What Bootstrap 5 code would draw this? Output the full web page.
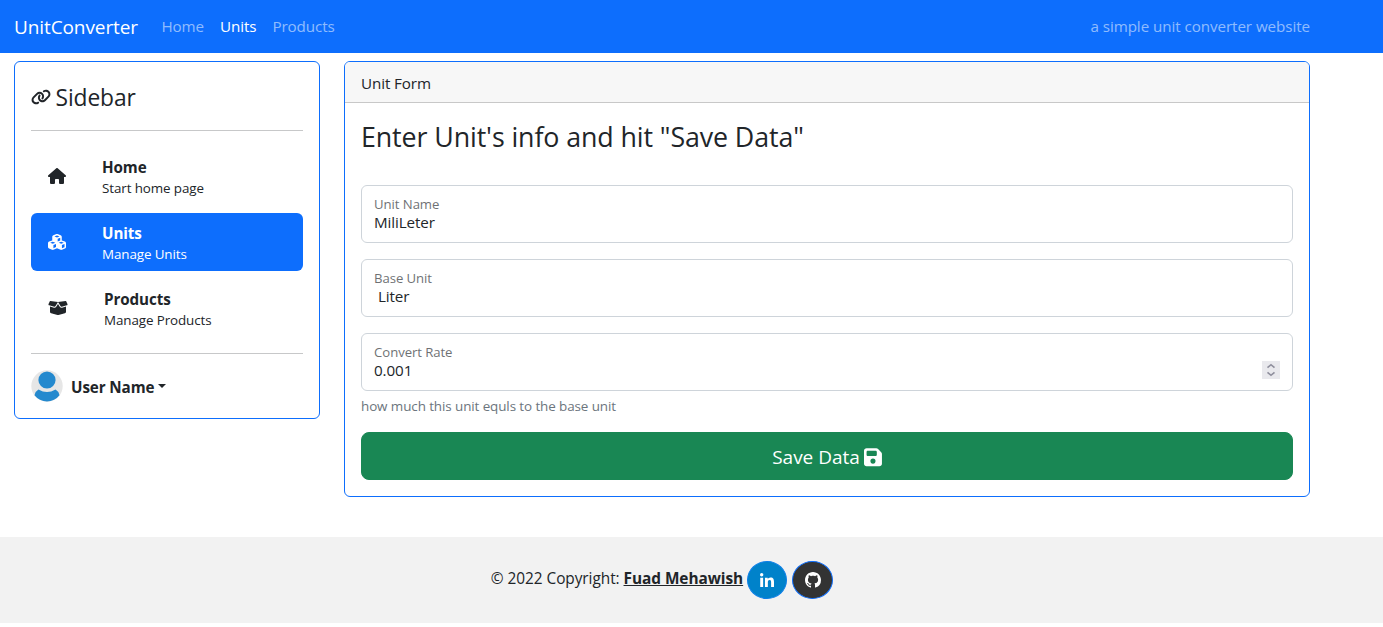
<!DOCTYPE html>
<html lang="en">
<head>
<meta charset="utf-8">
<meta name="viewport" content="width=device-width, initial-scale=1">
<title>UnitConverter</title>
<link href="https://cdn.jsdelivr.net/npm/bootstrap@5.3.0/dist/css/bootstrap.min.css" rel="stylesheet">
<style>
  body, .form-control, .btn { font-family: "Open Sans", "Noto Sans", sans-serif; }
  body { font-size: 15.2px; line-height: 24px; letter-spacing: -.1px; overflow: hidden; }
  .page-width { width: 1324px; }
  .page-width > .container { max-width: 1320px; }
  .topbar { height: 53px; }
  .topbar .navbar-brand { font-size: 19px; margin-right: 15.5px; letter-spacing: -.1px; }
  .topbar .nav-link, .topbar .navbar-text { letter-spacing: -.1px; padding-top: 7px; padding-bottom: 9px; }
  .topbar .navbar-text { letter-spacing: -.07px; }
  .fa-glyph { height: 1em; fill: currentColor; overflow: visible; display: inline-block; }
  .panel { border-radius: 6px; }
  .side-title { font-size: 22.8px; line-height: 29px; margin: 5px 0 18px; }
  .side-title .fa-glyph { font-size: 16px; margin: -2px 4.5px 0 0; }
  .side-link { height: 58px; padding: 0 16px; border-radius: 6px; color: #212529; display: flex; align-items: center; }
  .side-link.active { background: #0d6efd; color: #fff; }
  .side-link .fa-glyph { font-size: 16px; margin: 0 36px 0 1px; }
  .side-link strong { display: block; line-height: 21px; padding-top: 2px; }
  .side-link small { display: block; font-size: 13.4px; line-height: 20px; }
  .rule { margin: 0; border-top: 1px solid #212529; opacity: .25; }
  .user { margin-top: 16px; }
  .user strong { margin-top: 2px; }
  .panel .card-header { height: 41px; padding: 9px 16px 0; background: #f7f7f7; border-bottom-color: #c8c8c8; }
  .form-title { font-size: 26.8px; line-height: 34px; margin: 1px 0 31px; }
  .form-floating > .form-control { height: 58px; font-size: 15.2px; letter-spacing: -.1px; border-color: #ced4da; }
  .form-floating > label { font-size: 15.5px; color: #212529; padding-top: 17px; }
  .spinner-box { position: absolute; right: 13px; top: 28px; width: 18px; height: 18px; background: #e9e9ed; }
  .form-text { font-size: 13.45px; line-height: 21px; margin-top: 5px; color: #6c757d; }
  .save { height: 48px; font-size: 19px; line-height: 30px; border-radius: 8px; padding: 9px 8px 7px; margin-top: 15px; }
  .save .fa-glyph { font-size: 20.5px; }
  .foot { height: 86px; background: #f2f2f2; margin-top: 40px; }
  .copy { font-size: 15.4px; letter-spacing: -.05px; margin-top: -2px; }
  .round-btn { height: 38px; border-radius: 50%; color: #fff; border: 1px solid #0d6efd; display: inline-flex; align-items: center; justify-content: center; }
  .round-btn .fa-glyph { font-size: 16px; }
  .round-btn.in { width: 40px; background: #0082ca; border-color: #0d7fe8; margin-left: 4px; }
  .round-btn.gh { width: 41px; background: #333; margin-left: 5px; }
</style>
</head>
<body>
<nav class="navbar navbar-expand navbar-dark bg-primary topbar p-0">
  <div class="page-width"><div class="container d-flex align-items-center">
    <a class="navbar-brand" href="#">UnitConverter</a>
    <div class="navbar-nav me-auto">
      <a class="nav-link" href="#">Home</a>
      <a class="nav-link active" href="#">Units</a>
      <a class="nav-link" href="#">Products</a>
    </div>
    <span class="navbar-text">a simple unit converter website</span>
  </div></div>
</nav>

<div class="page-width"><div class="container">
  <div class="row mt-2 align-items-start">
    <div class="col-3">
      <div class="card panel border-primary">
        <div class="card-body">
          <h4 class="side-title fw-normal d-flex align-items-center"><svg class="fa-glyph" viewBox="0 0 640 512"><path d="M579.8 267.7c56.5-56.5 56.5-148 0-204.5c-50-50-128.8-56.5-186.3-15.4l-1.6 1.1c-14.4 10.3-17.7 30.3-7.4 44.6s30.3 17.7 44.6 7.4l1.6-1.1c32.1-22.9 76-19.3 103.8 8.6c31.5 31.5 31.5 82.5 0 114L422.3 334.8c-31.5 31.5-82.5 31.5-114 0c-27.9-27.9-31.5-71.8-8.6-103.8l1.1-1.6c10.3-14.4 6.9-34.4-7.4-44.6s-34.4-6.9-44.6 7.4l-1.1 1.6C206.5 251.2 213 330 263 380c56.5 56.5 148 56.5 204.5 0L579.8 267.7zM60.2 244.3c-56.5 56.5-56.5 148 0 204.5c50 50 128.8 56.5 186.3 15.4l1.6-1.1c14.4-10.3 17.7-30.3 7.4-44.6s-30.3-17.7-44.6-7.4l-1.6 1.1c-32.1 22.9-76 19.3-103.8-8.6C74 372 74 321 105.5 289.5L217.7 177.2c31.5-31.5 82.5-31.5 114 0c27.9 27.9 31.5 71.8 8.6 103.9l-1.1 1.6c-10.3 14.4-6.9 34.4 7.4 44.6s34.4 6.9 44.6-7.4l1.1-1.6C433.5 260.8 427 182 377 132c-56.5-56.5-148-56.5-204.5 0L60.2 244.3z"/></svg>Sidebar</h4>
          <hr class="rule">
          <nav class="d-flex flex-column gap-2 my-3">
            <a class="side-link text-decoration-none" href="#"><svg class="fa-glyph" viewBox="0 0 576 512"><path d="M575.8 255.5c0 18-15 32.1-32 32.1h-32l.7 160.2c0 2.7-.2 5.4-.5 8.1V472c0 22.1-17.9 40-40 40H392c-22.1 0-40-17.9-40-40V384c0-17.7-14.3-32-32-32H256c-17.7 0-32 14.3-32 32v88c0 22.1-17.9 40-40 40H104c-22.1 0-40-17.9-40-40V287.6H32c-18 0-32-14-32-32.1c0-9 3-17 10-24L266.4 8c7-7 15-8 22-8s15 2 21 7L564.8 231.5c8 7 12 15 11 24z"/></svg>
              <span class="side-text"><strong>Home</strong><small>Start home page</small></span></a>
            <a class="side-link active text-decoration-none" href="#"><svg class="fa-glyph" viewBox="0 0 576 512"><path d="M290.8 48.6l78.4 29.7L288 109.5 206.8 78.3l78.4-29.7c1.8-.7 3.8-.7 5.7 0zM136 92.5V204.7c-1.3 .4-2.6 .8-3.9 1.3l-96 36.4C14.4 250.6 0 271.5 0 294.7V413.9c0 22.2 13.1 42.3 33.5 51.3l96 42.2c14.4 6.3 30.7 6.3 45.1 0L288 457.5l113.5 49.9c14.4 6.3 30.7 6.3 45.1 0l96-42.2c20.3-8.9 33.5-29.1 33.5-51.3V294.7c0-23.3-14.4-44.1-36.1-52.4l-96-36.4c-1.3-.5-2.6-.9-3.9-1.3V92.5c0-23.3-14.4-44.1-36.1-52.4l-96-36.4c-12.8-4.8-26.9-4.8-39.7 0l-96 36.4C150.4 48.4 136 69.3 136 92.5zM392 210.6l-82.4 31.2V152.6L392 121v89.6zM154.8 250.9l78.4 29.7L152 311.7 70.8 280.6l78.4-29.7c1.8-.7 3.8-.7 5.7 0zm18.8 204.4V354.8L256 323.2v95.9l-82.4 36.2zM421.2 250.9c1.8-.7 3.8-.7 5.7 0l78.4 29.7L424 311.7l-81.2-31.1 78.4-29.7zM523.2 421.2l-77.6 34.1V354.8L528 323.2v90.7c0 3.2-1.9 6-4.8 7.3z"/></svg>
              <span class="side-text"><strong>Units</strong><small>Manage Units</small></span></a>
            <a class="side-link text-decoration-none" href="#"><svg class="fa-glyph" viewBox="0 0 640 512"><path d="M58.9 42.1c3-6.1 9.6-9.6 16.3-8.7L320 64 564.8 33.4c6.7-.8 13.3 2.7 16.3 8.7l41.7 83.4c9 17.9-.6 39.6-19.8 45.1L439.6 217.3c-13.9 4-28.8-1.9-36.2-14.3L320 64 236.6 203c-7.4 12.4-22.3 18.3-36.2 14.3L37.1 170.6c-19.3-5.5-28.8-27.2-19.8-45.1L58.9 42.1zM321.1 128l54.9 91.4c14.9 24.8 44.6 36.6 72.5 28.6L576 211.6v167c0 22-15 41.2-36.4 46.6l-204.1 51c-10.2 2.6-20.9 2.6-31 0l-204.1-51C79 419.7 64 400.5 64 378.5v-167L191.6 248c27.8 8 57.6-3.8 72.5-28.6L318.9 128h2.2z"/></svg>
              <span class="side-text"><strong>Products</strong><small>Manage Products</small></span></a>
          </nav>
          <hr class="rule">
          <a class="user d-flex align-items-center text-decoration-none text-dark dropdown-toggle" href="#"><svg class="me-2" width="32" height="32" viewBox="0 0 32 32"><circle cx="16" cy="16" r="15.7" fill="#e6e6e6"/><circle cx="16" cy="10" r="8.6" fill="#2489ce"/><path d="M7.5 19.5Q16 24.5 24.5 19.5Q27.500 21 28.500 25.200A15.700 15.700 0 0 1 3.500 25.200Q4.500 21 7.500 19.500Z" fill="#2489ce"/></svg><strong>User Name</strong></a>
        </div>
      </div>
    </div>
    <div class="col-9">
      <div class="card panel border-primary">
        <div class="card-header">Unit Form</div>
        <div class="card-body">
          <h3 class="form-title fw-normal">Enter Unit's info and hit "Save Data"</h3>
          <div class="form-floating mb-3"><input class="form-control" id="unit" placeholder="Unit Name" value="MiliLeter"><label for="unit">Unit Name</label></div>
          <div class="form-floating mb-3"><input class="form-control ps-3" id="base" placeholder="Base Unit" value="Liter"><label for="base">Base Unit</label></div>
          <div class="form-floating"><input class="form-control" id="rate" placeholder="Convert Rate" value="0.001"><label for="rate">Convert Rate</label>
            <span class="spinner-box"><svg class="d-block" width="18" height="18" fill="none" stroke="#8f8f9d" stroke-width="1.6"><path d="M5.500 6.700L9 3.700L12.500 6.700M5.500 11.300L9 14.300L12.500 11.300"/></svg></span></div>
          <div class="form-text">how much this unit equls to the base unit</div>
          <button class="btn btn-success w-100 save d-flex align-items-center justify-content-center" type="button">Save Data <svg class="fa-glyph ms-1" viewBox="0 0 448 512"><path d="M64 32C28.700 32 0 60.700 0 96V416c0 35.300 28.700 64 64 64H384c35.300 0 64-28.700 64-64V173.300c0-17-6.700-33.300-18.700-45.300L352 50.700C340 38.700 323.700 32 306.700 32H64zm0 96c0-17.700 14.300-32 32-32H288c17.700 0 32 14.300 32 32v64c0 17.700-14.300 32-32 32H96c-17.700 0-32-14.300-32-32V128zM224 416a64 64 0 1 1 0-128 64 64 0 1 1 0 128z"/></svg></button>
        </div>
      </div>
    </div>
  </div>
</div></div>

<footer class="foot d-flex">
  <div class="page-width d-flex align-items-center justify-content-center">
    <span class="copy">© 2022 Copyright: <a class="text-dark fw-bold" href="#">Fuad Mehawish</a></span>
    <a class="round-btn in" href="#" aria-label="LinkedIn"><svg class="fa-glyph" viewBox="0 0 448 512"><path transform="translate(0 32)" d="M100.280 448H7.400V148.900h92.880zM53.790 108.100C24.090 108.100 0 83.500 0 53.800a53.790 53.790 0 0 1 107.580 0c0 29.700-24.100 54.300-53.790 54.300zM447.900 448h-92.680V302.400c0-34.700-.7-79.200-48.290-79.200-48.290 0-55.690 37.700-55.690 76.700V448h-92.780V148.900h89.080v40.800h1.300c12.400-23.500 42.690-48.300 87.880-48.300 94 0 111.280 61.900 111.280 142.300V448z"/></svg></a>
    <a class="round-btn gh" href="#" aria-label="GitHub"><svg class="fa-glyph" viewBox="0 0 16 16"><path d="M8 0C3.580 0 0 3.580 0 8c0 3.540 2.290 6.530 5.470 7.590.4.070.55-.17.55-.38 0-.19-.01-.82-.01-1.490-2.010.37-2.530-.49-2.690-.94-.09-.23-.48-.94-.82-1.130-.28-.15-.68-.52-.01-.53.63-.01 1.080.58 1.230.82.72 1.210 1.870.87 2.330.66.07-.52.28-.87.51-1.070-1.780-.2-3.640-.89-3.640-3.950 0-.87.31-1.590.82-2.150-.08-.2-.36-1.020.08-2.120 0 0 .67-.21 2.200.82.64-.18 1.320-.27 2-.27.68 0 1.360.09 2 .27 1.530-1.040 2.200-.82 2.200-.82.44 1.100.16 1.920.08 2.120.51.56.82 1.270.82 2.150 0 3.070-1.870 3.750-3.650 3.950.29.25.54.73.54 1.480 0 1.070-.01 1.930-.01 2.200 0 .21.15.46.55.38A8.012 8.012 0 0 0 16 8c0-4.420-3.580-8-8-8z"/></svg></a>
  </div>
</footer>
<script src="https://cdn.jsdelivr.net/npm/bootstrap@5.3.0/dist/js/bootstrap.bundle.min.js"></script>
</body>
</html>
